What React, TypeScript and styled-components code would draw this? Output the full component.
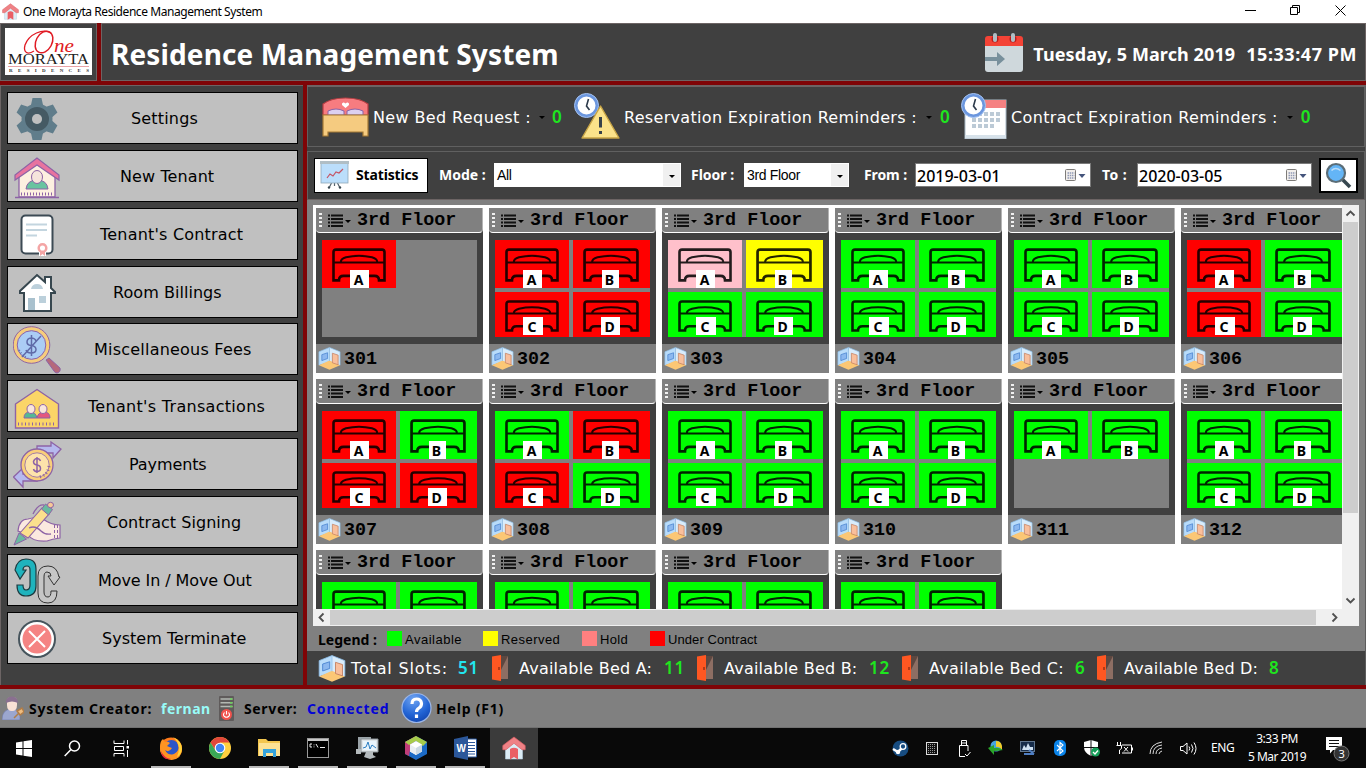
import React from 'react';
import styled, { createGlobalStyle } from 'styled-components';

const verdana = '"DejaVu Sans", Verdana, sans-serif';
const segoe = '"Noto Sans", "Segoe UI", sans-serif';
const msSans = '"Liberation Sans", Arial, sans-serif';

const Global = createGlobalStyle`
  * { box-sizing: border-box; }
  body { margin: 0; background: #404040; overflow: hidden; }
  svg { display: block; flex: none; }
`;

/* ---------- frame ---------- */

const Window = styled.div`
  width: 1366px;
  height: 768px;
  display: flex;
  flex-direction: column;
  background: #7f0406;
  overflow: hidden;
  white-space: pre;
`;

const TitleBar = styled.div`
  height: 23px;
  flex: none;
  background: #fff;
  display: flex;
  align-items: center;
  justify-content: space-between;
  padding-left: 2px;
`;

const TitleLeft = styled.div`
  display: flex;
  align-items: center;
  gap: 4px;
  font: 12px/18px ${segoe};
  letter-spacing: -0.44px;
  color: #000;
`;

const WindowControls = styled.div`
  display: flex;
  align-items: center;
  gap: 34px;
  padding: 0 20px 2px 0;
`;

const Header = styled.header`
  height: 58px;
  flex: none;
  display: flex;
  gap: 4px;
`;

const LogoPanel = styled.div`
  width: 97px;
  background: #404040;
  border: 1px solid #6c6464;
  padding: 4px;
`;

const HeaderMain = styled.div`
  flex: 1;
  background: #404040;
  border: 1px solid #6c6464;
  display: flex;
  align-items: center;
  color: #fff;
  padding: 0 8px 0 9px;
`;

const AppTitle = styled.h1`
  margin: 0;
  flex: 1;
  font: 700 28px/40px ${segoe};
  letter-spacing: 0.12px;
  padding-top: 3px;
`;

const Clock = styled.div`
  font: 700 18px/24px ${segoe};
  display: flex;
  gap: 11px;
  margin-left: 10px;
  padding-top: 3px;
`;
const Day = styled.span`letter-spacing: 0.1px;`;
const Time = styled.span`letter-spacing: 0.55px;`;

const Body = styled.div`
  height: 600px;
  flex: none;
  margin-top: 4px;
  display: flex;
  gap: 4px;
`;

const Sidebar = styled.nav`
  width: 303px;
  background: #404040;
  border: 1px solid #6c6464;
  border-width: 1px 0 0 1px;
  padding: 6px 5px 0 6px;
  display: flex;
  flex-direction: column;
  gap: 6px;
`;

const SideButton = styled.button<{ $pull?: boolean }>`
  height: 52px;
  margin: ${p => (p.$pull ? '-1px' : '0')} 0 0;
  flex: none;
  border: 1px solid #000;
  border-radius: 0;
  background: #c0c0c0;
  padding: 0 0 0 5px;
  display: flex;
  align-items: center;
  color: #000;
`;

const SideLabel = styled.span<{ $indent: number; $track: number }>`
  margin: 2px 0 0 ${p => p.$indent}px;
  font: 16px/20px ${verdana};
  letter-spacing: ${p => p.$track}px;
`;

const Main = styled.main`
  width: 1059px;
  background: #404040;
  border-top: 2px solid #6c6464;
  border-right: 1px solid #5c5c5c;
  display: flex;
  flex-direction: column;
`;

/* ---------- reminders ---------- */

const Reminders = styled.div`
  height: 60px;
  flex: none;
  display: flex;
  align-items: center;
  border: 1px solid #606060;
  border-top: 0;
  padding-left: 14px;
  color: #fff;
`;

const Reminder = styled.div<{ $track: number; $gap: number }>`
  display: flex;
  align-items: center;
  font: 16px/20px ${verdana};
  letter-spacing: ${p => p.$track}px;
  margin-right: ${p => p.$gap}px;
`;
const ReminderText = styled.span`margin: 2px 0 0 4px;`;
const Caret = styled.i<{ $left: number; $right?: number }>`
  border: solid transparent;
  border-width: 3px 3px 0;
  border-top-color: #000;
  margin: 2px ${p => p.$right ?? 0}px 0 ${p => p.$left}px;
`;
const Count = styled.b<{ $color?: string; $w: number; $right?: number }>`
  width: ${p => p.$w}px;
  font: 600 17px/20px ${segoe};
  letter-spacing: 0.8px;
  color: ${p => p.$color ?? '#1ee61e'};
  margin: 0 ${p => p.$right ?? 0}px 0 0;
`;

/* ---------- filters ---------- */

const Filters = styled.div`
  height: 49px;
  flex: none;
  margin-top: 4px;
  border: 1px solid #606060;
  border-bottom-color: #6c6464;
  display: flex;
  align-items: center;
  padding: 0 0 1px 6px;
  color: #fff;
`;

const StatsButton = styled.button`
  width: 114px;
  height: 35px;
  border: 1px solid #000;
  border-radius: 0;
  background: #fff;
  padding: 0 0 0 5px;
  display: flex;
  align-items: center;
  gap: 7px;
  font: 700 14px/20px ${segoe};
  letter-spacing: -0.15px;
  color: #000;
`;

const FieldLabel = styled.label<{ $w: number; $left: number; $track: number }>`
  width: ${p => p.$w}px;
  margin-left: ${p => p.$left}px;
  font: 700 14px/20px ${segoe};
  letter-spacing: ${p => p.$track}px;
`;

const Select = styled.div<{ $w: number }>`
  width: ${p => p.$w}px;
  height: 24px;
  background: #fff;
  color: #000;
  display: flex;
  align-items: center;
  padding-left: 3px;
  font: 14px/20px ${msSans};
  letter-spacing: -0.34px;
`;
const SelectText = styled.span`flex: 1;`;
const SelectArrow = styled.span`
  width: 17px;
  height: 22px;
  margin-right: 1px;
  background: #f0f0f0;
  display: flex;
  align-items: center;
  justify-content: center;
`;

const DateField = styled.div<{ $w: number }>`
  width: ${p => p.$w}px;
  height: 24px;
  border: 1px solid #7a7a7a;
  background: #fff;
  color: #000;
  display: flex;
  align-items: center;
  justify-content: space-between;
  padding: 1px 4px 0 1px;
  font: 500 16px/22px ${segoe};
`;

const SearchButton = styled.button`
  width: 39px;
  height: 35px;
  margin-left: 7px;
  border: 2px solid #000;
  border-radius: 0;
  background: #fff;
  padding: 0;
  display: flex;
  align-items: center;
  justify-content: center;
`;

/* ---------- rooms ---------- */

const RoomArea = styled.section`
  flex: 1;
  background: #808080;
  padding: 5px 5px 0 6px;
  display: flex;
  flex-direction: column;
`;

const RoomFrame = styled.div`
  width: 1046px;
  height: 421px;
  flex: none;
  display: grid;
  grid-template: 404px 17px / 1029px 17px;
  background: #fff;
`;

const RoomGrid = styled.div`
  overflow: hidden;
  padding: 3px;
  display: grid;
  grid-template-columns: repeat(6, 167px);
  grid-auto-rows: 165px;
  gap: 6px;
`;

const RoomCard = styled.article`
  background: #404040;
  display: flex;
  flex-direction: column;
`;

const RoomHead = styled.div`
  height: 25px;
  flex: none;
  background: #808080;
  border-bottom: 1px solid #fff;
  border-right: 1px solid #b4b4b4;
  border-radius: 0 0 4px 4px;
  display: flex;
  align-items: center;
  padding: 1px 0 0 3px;
  font: 700 18.400px/23px "Liberation Mono", "Courier New", monospace;
  color: #000;
`;
const Grip = styled.i`
  width: 3px;
  height: 16px;
  margin-right: 6px;
  background: repeating-linear-gradient(#f0f0f0 0 2px, #808080 2px 4px);
`;
const HeadCaret = styled.i`
  border: solid transparent;
  border-width: 3px 3px 0;
  border-top-color: #000;
  margin: 1px 6px 0 2px;
`;

const BedPanel = styled.div`
  width: 155px;
  height: 97px;
  margin: 7px 6px;
  flex: none;
  background: #808080;
  display: grid;
  grid-template: 48px 45px / 74px 77px;
  gap: 4px;
`;

const BedTile = styled.div<{ $status: Status }>`
  display: grid;
  position: relative;
  background: ${p => ({ A: '#00ff00', R: '#ffff00', H: '#ffc0cb', U: '#ff0000' })[p.$status]};
`;
const BedBadge = styled.span<{ $lower: boolean; $w: number }>`
  position: absolute;
  left: ${p => (p.$w === 17 ? 29 : 28)}px;
  bottom: ${p => (p.$lower ? 2 : 0)}px;
  width: ${p => p.$w}px;
  height: 18px;
  padding-right: 2px;
  background: #fff;
  color: #000;
  text-align: center;
  font: 700 14px/19px ${segoe};
`;

const RoomFoot = styled.div`
  flex: 1;
  background: #808080;
  display: flex;
  align-items: center;
  gap: 3px;
  padding-left: 2px;
  font: 700 18.400px/22px "Liberation Mono", "Courier New", monospace;
  color: #000;
`;
const RoomNumber = styled.span`padding-top: 2px;`;

const VScroll = styled.div`
  background: #f0f0f0;
  display: flex;
  flex-direction: column;
  align-items: center;
  justify-content: space-between;
`;
const VThumb = styled.div`
  width: 15px;
  height: 291px;
  background: #cdcdcd;
  margin-bottom: 79px;
`;
const HScroll = styled.div`
  grid-column: span 2;
  background: #f0f0f0;
  display: flex;
  align-items: center;
`;
const HThumb = styled.div`
  width: 986px;
  height: 15px;
  background: #cdcdcd;
  margin-right: 10px;
`;

const Legend = styled.div`
  height: 25px;
  flex: none;
  display: flex;
  align-items: center;
  padding: 2px 0 0 5px;
  font: 13px/18px ${msSans};
  color: #000;
`;
const LegendTitle = styled.b`
  width: 69px;
  font: 700 14px/18px ${segoe};
`;
const LegendItem = styled.span<{ $color: string; $w: number; $track: number }>`
  width: ${p => p.$w}px;
  letter-spacing: ${p => p.$track}px;
  display: flex;
  gap: 3px;
  align-items: center;
  &::before {
    content: '';
    width: 15px;
    height: 15px;
    margin-top: -2px;
    background: ${p => p.$color};
  }
`;

const Totals = styled.div`
  height: 34px;
  flex: none;
  background: #404040;
  display: flex;
  align-items: center;
  padding-left: 11px;
  color: #fff;
  font: 16px/20px ${verdana};
`;
const TotalText = styled.span<{ $w: number; $left: number; $track: number }>`
  width: ${p => p.$w}px;
  margin-left: ${p => p.$left}px;
  padding-top: 2px;
  letter-spacing: ${p => p.$track}px;
`;

/* ---------- status bar ---------- */

const StatusBar = styled.footer`
  height: 39px;
  flex: none;
  margin-top: 4px;
  background: #808080;
  border-bottom: 1px solid #707070;
  display: flex;
  align-items: center;
  padding-left: 2px;
  color: #000;
  font: 700 14px/18px ${segoe};
`;
const StatusText = styled.span<{ $w: number; $left: number; $track: number; $color?: string }>`
  width: ${p => p.$w}px;
  margin-left: ${p => p.$left}px;
  padding-top: 1px;
  letter-spacing: ${p => p.$track}px;
  color: ${p => p.$color ?? '#000'};
`;

/* ---------- taskbar ---------- */

const Taskbar = styled.div`
  height: 40px;
  flex: none;
  background: #090909;
  display: flex;
  color: #fff;
`;
const Task = styled.div<{ $w: number; $running?: boolean; $active?: boolean }>`
  width: ${p => p.$w}px;
  display: flex;
  align-items: center;
  justify-content: center;
  background: ${p => (p.$active ? '#3b3b3b' : p.$running ? 'linear-gradient(#b9b9b9, #b9b9b9) 50% 100% / 40px 2px no-repeat' : 'none')};
`;
const Tray = styled.div`
  margin-left: auto;
  display: flex;
  align-items: center;
  font: 12px/18px ${segoe};
`;
const TrayIcon = styled.span`
  width: 32px;
  display: flex;
  justify-content: center;
`;
const Language = styled.span`
  width: 34px;
  margin-left: 7px;
  letter-spacing: -0.4px;
`;
const TrayClock = styled.div`
  width: 64px;
  text-align: center;
  letter-spacing: -0.5px;
`;
const Notifications = styled.span`
  margin: 3px 16px 0 17px;
`;

/* ---------- icons ---------- */

const HouseIcon = ({ s }: { s: number }) => (
  <svg width={s} height={s} viewBox="0 0 24 24">
    <path d="M3.500 11v12h17V11L12 4z" fill="#dcecf5" stroke="#b5cfdf" strokeWidth=".6" />
    <path d="M8 13q4-2.500 8 0v10.500l-4-2.500-4 2.500z" fill="#ea5f66" />
    <path d="M12 1 .8 9.500v4.200H4l8-6.400 8 6.400h3.200V9.500z" fill="#ef8185" stroke="#d85f64" strokeWidth=".7" />
  </svg>
);

const LogoArt = () => (
  <svg width="87" height="47" viewBox="0 0 87 47">
    <rect width="87" height="47" fill="#fff" />
    <ellipse cx="39" cy="14" rx="8" ry="11.500" transform="rotate(28 39 14)" fill="none" stroke="#e01b24" strokeWidth="1.500" />
    <path d="M46 5C38 0 24 6 20 17c-2 8 3 10 9 6" fill="none" stroke="#e01b24" strokeWidth="1.300" />
    <text x="49" y="24" fontFamily="Liberation Serif, serif" fontStyle="italic" fontSize="18" fill="#e01b24" textLength="20" lengthAdjust="spacingAndGlyphs">ne</text>
    <text x="3" y="36" fontFamily="Liberation Serif, serif" fontSize="15" fill="#222" textLength="81" lengthAdjust="spacingAndGlyphs">MORAYTA</text>
    <path d="M3 38.500h81" stroke="#e9a3a6" />
    <text x="4" y="43.500" fontFamily="Liberation Serif, serif" fontWeight="700" fontSize="5" fill="#333" textLength="80">RESIDENCES</text>
  </svg>
);

const DateIcon = () => (
  <svg width="38" height="39" viewBox="0 0 38 39">
    <path d="M0 13h38v23q0 3-3 3H3q-3 0-3-3z" fill="#cfd8dc" />
    <path d="M0 13V6q0-3 3-3h32q3 0 3 3v7z" fill="#f44336" />
    <circle cx="10" cy="6" r="3.500" fill="#b71c1c" /><circle cx="28" cy="6" r="3.500" fill="#b71c1c" />
    <rect x="8" y="0" width="4" height="9" rx="2" fill="#b0bec5" /><rect x="26" y="0" width="4" height="9" rx="2" fill="#b0bec5" />
    <path d="M0 24h12v-5l8 7-8 7v-5H0z" fill="#78909c" />
  </svg>
);

const box = { width: 50, height: 50, viewBox: '0 0 50 50' };

const GearIcon = () => (
  <svg {...box}>
    <g fill="#607d8b">
      {[0, 60, 120].map(a => <path key={a} transform={`rotate(${a} 24 26)`} d="M18 12l1.500-7h9l1.500 7v28l-1.500 7h-9L18 40z" />)}
      <circle cx="24" cy="26" r="15.500" />
    </g>
    <circle cx="24" cy="26" r="8.500" fill="none" stroke="#455a64" strokeWidth="7" />
    <circle cx="24" cy="26" r="5" fill="#c0c0c0" />
  </svg>
);

const TenantIcon = () => (
  <svg {...box}>
    <path d="M6 22v24h36V22L24 9z" fill="#fdf0e0" stroke="#8d63a6" strokeWidth="1.300" />
    <path d="M24 7 2 24v5l22-15 22 15v-5z" fill="#e8739f" stroke="#8d63a6" strokeWidth="1.200" />
    <path d="M13 38q1-9 11-9t11 9z" fill="#69c3a0" stroke="#8d63a6" />
    <ellipse cx="24" cy="26" rx="5.500" ry="6.500" fill="#f6e4dc" stroke="#8d63a6" />
    <path d="M8 43h33" stroke="#8d63a6" strokeWidth="3" strokeDasharray="1 2" /><path d="M2 46.500h44" stroke="#8d63a6" strokeWidth="1.500" />
  </svg>
);

const ContractIcon = () => (
  <svg {...box}>
    <rect x="8.500" y="6.500" width="31" height="38" rx="4" fill="#fff" stroke="#3c4a54" strokeWidth="2" />
    <path d="M13 15.500h21M13 21h21M13 26.500h11" stroke="#c3d5df" strokeWidth="2" />
    <path d="M26 42v5h7v-5z" fill="#fff" /><path d="M27 40v7l2.500-2 2.500 2v-7z" fill="#f4a5a5" />
    <circle cx="29.500" cy="39" r="3.800" fill="#fff" stroke="#f4a5a5" strokeWidth="2.500" />
  </svg>
);

const BillingIcon = () => (
  <svg {...box}>
    <path d="M11 44V26H7v-2L24 8l8 7v-5h6v11l4 4v1h-4v18z" fill="#fff" stroke="#37474f" strokeWidth="2" />
    <path d="M18 22q1-5 6-5t6 5z" fill="#bcd0db" /><path d="M15 43V31h7v12z" fill="#a9c1ce" /><path d="M26 29h7v7h-7z" fill="#bcd0db" />
  </svg>
);

const FeesIcon = () => (
  <svg {...box}>
    <path d="M33 36l3-2 11 10q1 4-3 5-2 0-3-2z" fill="#b5697b" stroke="#8d63a6" />
    <circle cx="18.500" cy="21" r="16.500" fill="none" stroke="#f6cd7c" strokeWidth="4" />
    <circle cx="18.500" cy="21" r="18.300" fill="none" stroke="#8d63a6" />
    <circle cx="18.500" cy="21" r="14.300" fill="#abcdf5" stroke="#8d63a6" />
    <path d="M9 33 28 12M18.500 11v21M23 17q-1-3-5-3-4 .5-4 4 0 3 4 3.500 5 .5 5 4t-5 3.500q-4 0-5-3" fill="none" stroke="#5f6aa8" strokeWidth="1.500" />
    <path d="M6 26q3 6 9 8" fill="none" stroke="#6573b0" strokeWidth="2" strokeDasharray="1 2" />
  </svg>
);

const TransactionsIcon = () => (
  <svg {...box}>
    <path d="M2.500 23 24 8.500 45.500 23v24h-43z" fill="#fbd568" stroke="#8d63a6" strokeWidth="1.400" />
    <path d="M11 37q0-6 6-6t7 6z" fill="#55b895" stroke="#8d63a6" /><path d="M24 37q1-6 7-6t6 6z" fill="#e4587f" stroke="#8d63a6" />
    <ellipse cx="18" cy="28" rx="4" ry="4.500" fill="#f9e6dc" stroke="#8d63a6" /><ellipse cx="30" cy="28" rx="4" ry="4.500" fill="#f9e6dc" stroke="#8d63a6" />
    <path d="M5 43h38" stroke="#8d63a6" strokeWidth="3" strokeDasharray="1 2.500" />
  </svg>
);

const PaymentsIcon = () => (
  <svg {...box}>
    <path d="M24 7h14V3l10 7-8 9 0-5H24zM24 42H10v6L.5 38 10 29v6h14z" fill="#b6b9ee" stroke="#8d63a6" strokeWidth="1.300" />
    <circle cx="24" cy="26" r="16" fill="#f9cf7a" stroke="#8d63a6" strokeWidth="1.300" />
    <circle cx="24" cy="26" r="12.200" fill="#fde3ab" stroke="#8d63a6" strokeWidth=".8" />
    <path d="M24 18v16M27.500 22q-1-2.500-3.500-2.500t-3.500 3q0 3 3.500 3.500 3.500.5 3.500 3.500T24 32.500q-3 0-3.500-2.500" fill="none" stroke="#8d63a6" strokeWidth="1.500" />
    <path d="M36 27q-1 9-10 11" fill="none" stroke="#8d63a6" strokeWidth="3" strokeDasharray="1 2.500" />
  </svg>
);

const SigningIcon = () => (
  <svg {...box}>
    <path d="M5 34q1-12 10-12 10-3 15 0 8 6 17 6v13q-8 1-13 3-14 1-19-6z" fill="#fbe9df" stroke="#8d63a6" strokeWidth="1.200" />
    <path d="M41.500 28v14M44.500 28v13" stroke="#8d63a6" strokeDasharray="3 2" />
    <path d="M7 36 29 11l7 6-21 24z" fill="#fbe08d" stroke="#8d63a6" strokeWidth="1.100" />
    <path d="M28.500 12l4-5 7 5.500-4 5.500zM1 48l5-12 7.500 6z" fill="#69b9a0" stroke="#8d63a6" /><ellipse cx="37.500" cy="8" rx="3" ry="2.700" fill="#f7c896" stroke="#8d63a6" />
    <path d="M31 8q-6-1-11 9M16 31q6-3 12 3 4 4 10 3" fill="none" stroke="#8d63a6" strokeWidth="1.300" />
  </svg>
);

const MoveIcon = () => (
  <svg {...box}>
    <path d="M2 15q2-11 11-11 10 0 10 10v17q0 10-10 10-9 0-9-11h6q0 5 3 5 4 0 4-5V15q0-4-3-4-4 0-4 4h3l-6 9-5-9z" fill="#1fb3bd" stroke="#1b3b40" strokeWidth="1.200" />
    <path d="M46 22q-2-11-11-11-10 0-10 10v17q0 10 10 10 9 0 9-12h-6q0 6-3 6-4 0-4-5V22q0-5 3-5 4 0 4 4h-3l6 9 6-8z" fill="#c6c6c6" stroke="#333" strokeWidth="1" />
  </svg>
);

const TerminateIcon = () => (
  <svg {...box}>
    <circle cx="24" cy="26" r="18" fill="#fff" stroke="#46545c" strokeWidth="2" />
    <circle cx="24" cy="26" r="14.500" fill="#f58483" />
    <path d="m16 18 16 16m0-16L16 34" stroke="#fff" strokeWidth="2" />
  </svg>
);

const BedRequestIcon = () => (
  <svg width="47" height="40" viewBox="0 0 47 40">
    <path d="M1 18V7q8-6 22.500-6T46 7v11z" fill="#f77c80" stroke="#b83d42" strokeWidth="1.200" />
    <path d="M6 18v-4q8-4 16 0v4zM25 18v-4q8-4 16 0v4z" fill="#dcd0f0" stroke="#8d63a6" />
    <path d="M1 18h45v21h-5v-4H6v4H1z" fill="#f5cb80" stroke="#a57a35" strokeWidth="1.200" />
    <path d="M23.500 11l-3.500-3q-.5-3 2-2.500l1.500 1 1.500-1q2.500-.5 2 2.500z" fill="#fff" />
  </svg>
);

const ClockFace = () => (
  <>
    <circle cx="12.500" cy="12.500" r="10.500" fill="#fff" stroke="#6b96de" strokeWidth="3" />
    <circle cx="12.500" cy="12.500" r="12" fill="none" stroke="#a5c3f2" strokeWidth="1" />
    <path d="m14.500 6-2 7 3 4" fill="none" stroke="#2c3a4a" strokeWidth="1.600" />
  </>
);

const ReservationIcon = () => (
  <svg width="46" height="47" viewBox="0 0 46 47">
    <ClockFace />
    <path d="M26.500 13 45 45H8z" fill="#fbe28a" stroke="#c7a445" strokeWidth="1.400" strokeLinejoin="round" />
    <path d="M26.500 24v10.500M26.500 38v3" stroke="#37414a" strokeWidth="3" />
  </svg>
);

const ContractExpiryIcon = () => (
  <svg width="46" height="47" viewBox="0 0 46 47">
    <rect x="4" y="7" width="41" height="38.500" fill="#fff" stroke="#a9b9c6" />
    <path d="M4 7h41v8H4z" fill="#f58182" /><path d="M4 42h41v3.500H4z" fill="#d7e2ea" />
    <path d="M17 21h22M11 27h28M11 33h22" stroke="#bccad6" strokeWidth="4" strokeDasharray="4 2" />
    <ClockFace />
  </svg>
);

const ChartIcon = () => (
  <svg width="29" height="28" viewBox="0 0 29 28">
    <path d="M14.500 21v4m-3-3-2 4m8-4 2 4" stroke="#56646e" strokeWidth="1.200" />
    <rect x="1" y="2" width="27" height="20" fill="#bbdefb" stroke="#90a9b8" strokeWidth=".8" />
    <rect x="0" y="0" width="29" height="3" fill="#b0bec5" />
    <path d="m7 17 3-4 3 2 3-4 3 1 4-4" fill="none" stroke="#c55363" strokeWidth="1.200" />
    <circle cx="9" cy="26.500" r="1.200" fill="#37474f" /><circle cx="20" cy="26.500" r="1.200" fill="#37474f" />
  </svg>
);

const PickerIcon = () => (
  <svg width="21" height="13" viewBox="0 0 21 13">
    <rect x=".5" y=".5" width="10" height="11" rx="1" fill="#f2efec" stroke="#7d7b78" />
    <path d="M2.500 4h7M2.500 6.500h7M2.500 9h7" stroke="#8f99b5" strokeDasharray="1.500 .7" strokeWidth="1.500" />
    <path d="M13.500 5h7L17 9z" fill="#44547c" />
  </svg>
);

const SearchIcon = () => (
  <svg width="27" height="27" viewBox="0 0 27 27">
    <path d="m17 17 8 8" stroke="#37474f" strokeWidth="3.500" />
    <circle cx="11" cy="11" r="9" fill="#64b5f6" stroke="#5b6d77" strokeWidth="2.200" />
    <path d="M6.500 8.500q4-4 9 0" stroke="#bbdefb" strokeWidth="1.600" fill="none" />
  </svg>
);

const ListIcon = () => (
  <svg width="15" height="13" viewBox="0 0 15 13">
    <path d="M3 1.500h12M3 5h12M3 8.500h12M3 12h12M0 1.500h2M0 5h2M0 8.500h2M0 12h2" stroke="#111" strokeWidth="1.900" />
  </svg>
);

const BedOutline = styled.svg.attrs({ viewBox: '0 0 54 33', preserveAspectRatio: 'none' })<{ $wide: boolean; $lower: boolean }>`
  width: ${p => (p.$wide ? 56 : 54)}px;
  height: ${p => (p.$lower ? 32 : 34)}px;
  margin: 8px 0 0 10px;
  opacity: 0.86;
`;

const BedShape = ({ wide, lower }: { wide: boolean; lower: boolean }) => (
  <BedOutline $wide={wide} $lower={lower}>
    <path d="M1.500 31.500V4q0-2.500 2.500-2.500h46q2.500 0 2.500 2.500v27.500h-5.500q0-4.500-4.500-4.500h-31q-4.500 0-4.500 4.500z" fill="none" stroke="#000" strokeWidth="2.600" />
    <path d="M2 14h50M9 14q-1-3 5-5 13-3 26 0 6 2 5 5" fill="none" stroke="#000" strokeWidth="2" />
  </BedOutline>
);

const CubeIcon = ({ w, h }: { w: number; h: number }) => (
  <svg width={w} height={h} viewBox="0 0 24 24" preserveAspectRatio="none">
    <path d="M1 5 12 .5V15L1 19z" fill="#b9dcfa" /><path d="M12 .5 23 5v14l-11-4z" fill="#d9ecfb" />
    <path d="M1 19l11-5 11 5-11 4.800z" fill="#fbc775" />
    <path d="M4 8l6-2v6l-6 2.200z" fill="#8cb8ef" stroke="#4b84d0" strokeWidth=".8" />
    <path d="M15 16.500V6.500l6 2V18.500z" fill="#f9bf9c" stroke="#c48264" strokeWidth=".8" />
    <path d="M1 5 12 .5 23 5M12 1v13.500M1 5v14M23 5v14" stroke="#8fc1ec" strokeWidth=".7" fill="none" />
  </svg>
);

const DoorIcon = () => (
  <svg width="16" height="26" viewBox="0 0 16 26">
    <path d="M6 1h10v23H6z" fill="#8d6e63" /><path d="m16 1-7 14V1z" fill="#5d4740" />
    <path d="M0 1.500 9 0v26l-9-1.500z" fill="#ff5722" /><path d="M7 12v3" stroke="#8b2a10" strokeWidth="1.300" />
  </svg>
);

const CreatorIcon = () => (
  <svg width="22" height="24" viewBox="0 0 22 24">
    <path d="M0 24q0-11 10-11 6 0 8 4v7z" fill="#9ba6cf" stroke="#6f78a8" strokeWidth=".6" />
    <path d="M5 5q0-4 5-4t5 4v4q0 6-5 6T5 9z" fill="#f9e1d5" /><path d="M4 7q-1-6 6-6.500Q16 .5 16 7q-6-3-12 0z" fill="#8a7090" />
    <path d="m12 22 5-5M15 15l5-3 2 4-4 3z" stroke="#b07d48" strokeWidth="1.500" fill="#efbc7f" />
  </svg>
);

const ServerIcon = () => (
  <svg width="15" height="25" viewBox="0 0 15 25">
    <rect width="15" height="25" rx="1" fill="#5f5b5b" />
    <path d="M1.500 3h12M1.500 6.800h12M1.500 10.500h12" stroke="#b3b8b2" strokeWidth="1.600" /><path d="M11 3h2.500M11 6.800h2.500M11 10.500h2.500" stroke="#6bd35b" strokeWidth="1.600" />
    <circle cx="7.500" cy="18.500" r="5.500" fill="#f2524d" /><path d="M5.500 16.500q-2 2.500 0 4t4 0q2-1.500 0-4M7.500 15v3.500" stroke="#fff" strokeWidth="1.100" fill="none" />
  </svg>
);

const HelpIcon = () => (
  <svg width="31" height="32" viewBox="0 0 31 32">
    <defs><radialGradient id="help" cx=".4" cy=".2" r=".9"><stop offset="0" stopColor="#6fa4f2" /><stop offset=".6" stopColor="#2163d4" /><stop offset="1" stopColor="#0e3fa8" /></radialGradient></defs>
    <circle cx="15.500" cy="16" r="14.500" fill="url(#help)" stroke="#9cb6e6" strokeWidth="1.200" />
    <path d="M11 12q0-5 4.500-5t5 4.500q0 3-2.500 4.500t-2.500 4M15.500 22.500v3.500" stroke="#fff" strokeWidth="3.200" fill="none" />
  </svg>
);

/* taskbar icons */
const StartIcon = () => (
  <svg width="16" height="17" viewBox="0 0 16 17" fill="#fff"><path d="M0 2.500 6.500 1.500v6.500H0zM7.500 1.300 16 0v8H7.500zM0 9h6.500v6.500L0 14.500zM7.500 9H16v8l-8.500-1.300z" /></svg>
);
const TaskSearchIcon = () => (
  <svg width="17" height="17" viewBox="0 0 17 17" fill="none" stroke="#fff" strokeWidth="1.500"><circle cx="10.500" cy="6" r="5" /><path d="M7 9.500.7 16" /></svg>
);
const TaskViewIcon = () => (
  <svg width="17" height="17" viewBox="0 0 17 17" fill="none" stroke="#fff"><path d="M1 .5v3h10v-3M1 16.500v-3h10v3M1.500 6.500h9v4h-9zM14.500 0v4.500M14.500 10v7" /><path d="M13.500 6h2.500v2.500h-2.500z" fill="#fff" stroke="none" /></svg>
);
const FirefoxIcon = () => (
  <svg width="24" height="24" viewBox="0 0 24 24">
    <circle cx="12" cy="12.500" r="11" fill="#ff7b1c" /><circle cx="12.500" cy="11.500" r="7.500" fill="#2b56c8" />
    <path d="M1 11Q1 5 4 3l2 3q3-1 5 1l-3 3q2 1 5 2-3 5-7 2 3 6 9 4 6-3 4-9-1-4-3-6 7 4 7 10 0 10-10.500 11Q1 22 1 11z" fill="#ff9422" />
    <path d="M14 1q9 4 9 12-1 6-5 8 2-5 2-9-1-7-6-11z" fill="#ffd43a" /><path d="M2 15q3 7 10 8-9 2-10-8z" fill="#e5233f" />
  </svg>
);
const ChromeIcon = () => (
  <svg width="22" height="22" viewBox="0 0 22 22">
    <circle cx="11" cy="11" r="11" fill="#ffcf3f" />
    <path d="M1.500 5.500A11 11 0 0 1 20.500 5.500H11L6.500 13.500z" fill="#e2473a" /><path d="M1.500 5.500A11 11 0 0 0 11 22L15.500 13.500 6.500 13.500z" fill="#3aa757" />
    <circle cx="11" cy="11" r="5.300" fill="#fff" /><circle cx="11" cy="11" r="4.200" fill="#4285f4" />
  </svg>
);
const ExplorerIcon = () => (
  <svg width="22" height="20" viewBox="0 0 22 20">
    <path d="M0 1h8l2 2h12v15H0z" fill="#f3c64f" /><path d="M1 5h21v13H1z" fill="#fde294" /><path d="M5 19v-8h13v8h-3v-4H8v4z" fill="#35a3db" />
  </svg>
);
const CmdIcon = () => (
  <svg width="22" height="20" viewBox="0 0 22 20">
    <rect x=".5" y=".5" width="21" height="19" fill="#000" stroke="#9a9a9a" /><path d="M1 1h20v2H1z" fill="#c9c9c9" />
    <path d="M5 6H3v3h2M7 6.500v.8M7 8.500v.8M9 6l2 3.500M13 9.500h5" stroke="#eee" fill="none" />
  </svg>
);
const MonitorIcon = () => (
  <svg width="24" height="22" viewBox="0 0 24 22">
    <path d="M3 0h13v12H3z" fill="#9aa3a8" /><path d="M6 2h17v13H6z" fill="#dfe5e8" stroke="#8d9498" /><path d="M8 4h13v9H8z" fill="#e9f4fb" />
    <path d="m8 11 3-1 2-5 2 7 2-4 4 3" stroke="#2a7cc0" fill="none" /><path d="M1 12h5v5H1zM11 15h7v3l3 2-6 2-6-2z" fill="#b4babd" />
  </svg>
);
const NetbeansIcon = () => (
  <svg width="22" height="24" viewBox="0 0 22 24">
    <path d="M11 0 22 6v12l-11 6L0 18V6z" fill="#1b6ac6" /><path d="M11 0 0 6v12l4 2 2-12 6-4z" fill="#d2386f" opacity=".9" /><path d="M11 0 22 6l-4 4-7-5-7 4-4-3z" fill="#a7cc4b" />
    <path d="m11 5 6 3.500v7L11 19l-6-3.500v-7z" fill="#fff" /><path d="m11 12 6-3.500v7L11 19z" fill="#cbd9e4" /><path d="M11 12 5 8.500v7L11 19z" fill="#e9eef2" />
  </svg>
);
const WordIcon = () => (
  <svg width="23" height="24" viewBox="0 0 23 24">
    <path d="M13 3h9.500v18H13z" fill="#fff" stroke="#2b579a" /><path d="M14 6.500h7M14 9.500h7M14 12.500h7M14 15.500h7M14 18h7" stroke="#2b579a" /><path d="M0 3 14 0v24L0 21z" fill="#2b579a" />
    <text x="2.500" y="16" fontFamily="Liberation Sans" fontWeight="700" fontSize="10" fill="#fff">W</text>
  </svg>
);

const SteamIcon = () => (
  <svg width="17" height="17" viewBox="0 0 17 17"><circle cx="8.500" cy="8.500" r="8" fill="#174c80" /><path d="m1 9 5 3 5-5" stroke="#fff" strokeWidth="2.500" fill="none" /><circle cx="11" cy="6.500" r="2.800" fill="#174c80" stroke="#fff" strokeWidth="1.300" /><circle cx="6" cy="12" r="2.200" fill="#fff" /></svg>
);
const GridIcon = () => (
  <svg width="12" height="13" viewBox="0 0 12 13"><rect x=".5" y=".5" width="11" height="12" fill="#111" stroke="#ddd" /><path d="M2 2.500h8M2 4.500h8M2 6.500h8M2 8.500h8M2 10.500h8" stroke="#999" strokeDasharray="1 1" /></svg>
);
const UsbIcon = () => (
  <svg width="13" height="17" viewBox="0 0 13 17" fill="none" stroke="#fff"><path d="M3.500 5.500V.5h5v5M7 16.500H1.500v-11h8.500V11M5 2v2M7 2v2M7 14l2 2 3.500-4" /></svg>
);
const IdmIcon = () => (
  <svg width="16" height="16" viewBox="0 0 16 16"><circle cx="8" cy="6" r="5.500" fill="#46a3df" /><path d="M8 1q7 0 6 9-3-4-6-3z" fill="#f2cc28" /><path d="M0 8l6-3v3q5-1 9 2-5 1-9 1v4z" fill="#2aa52a" /></svg>
);
const DisplayIcon = () => (
  <svg width="16" height="15" viewBox="0 0 16 15"><rect x=".5" y=".5" width="14" height="10" fill="#162c4a" stroke="#60768e" /><path d="M2 9l2-5 2 3 2-5 2 4h3v3z" fill="#cfe1f2" /><path d="M4 13h10M9 9l5 4" stroke="#4f7ec2" strokeWidth="2" /></svg>
);
const BluetoothIcon = () => (
  <svg width="12" height="16" viewBox="0 0 12 16"><rect width="12" height="16" rx="5" fill="#0a84ea" /><path d="m3 5 6 6-3 2.500v-11L9 5l-6 6" stroke="#fff" fill="none" strokeWidth="1.100" /></svg>
);
const ShieldIcon = () => (
  <svg width="16" height="17" viewBox="0 0 16 17"><path d="M7 0 0 2v5q0 6 7 9 7-3 7-9V2z" fill="#fff" /><path d="M7 0v16M0 7.500h14" stroke="#111" /><circle cx="11.500" cy="12" r="4.500" fill="#16a05a" /><path d="m9 12 2 2 3-3.500" stroke="#fff" fill="none" strokeWidth="1.300" /></svg>
);
const PowerIcon = () => (
  <svg width="17" height="13" viewBox="0 0 17 13" fill="none" stroke="#fff"><path d="M1.500 0v3M4.500 0v3M.5 3.500h5v3l-2 1.500v4M6 3h9.500v8H6M16.500 5.500v3M8 5l4 4.500M12 5 8 9.500" /></svg>
);
const WifiIcon = () => (
  <svg width="14" height="14" viewBox="0 0 14 14" fill="none" stroke="#ddd"><path d="M1 13Q1 3 13 1M4 13q0-8 9-9M7 13q0-5 6-6M10 13q0-2 3-3" /></svg>
);
const SpeakerIcon = () => (
  <svg width="17" height="13" viewBox="0 0 17 13" fill="none" stroke="#fff"><path d="M.5 4.500v4H3l4 3.500V1L3 4.500zM9 4.500q1.500 2 0 4M11.500 2.500q3 4 0 8M14 .5q4 6 0 12" /></svg>
);
const NotifyIcon = () => (
  <svg width="24" height="25" viewBox="0 0 24 25">
    <path d="M0 0h16v13H7l-3 3.500V13H0z" fill="#fff" /><path d="M3 3.500h10M3 6.500h10M3 9.500h10" stroke="#111" />
    <circle cx="15.500" cy="16.500" r="7.500" fill="#333" stroke="#777" /><text x="12.500" y="20.500" fontFamily="Noto Sans" fontSize="11" fill="#fff">3</text>
  </svg>
);

const Arrow = ({ d }: { d: string }) => (
  <svg width="17" height="17" viewBox="0 0 17 17"><path d={d} fill="none" stroke="#505050" strokeWidth="1.800" /></svg>
);

/* ---------- data ---------- */

type Status = 'A' | 'R' | 'H' | 'U';

const menu: [string, () => React.ReactElement, number, number, boolean?][] = [
  ['Settings', GearIcon, 68, 0.17],
  ['New Tenant', TenantIcon, 57, 0.1],
  ["Tenant's Contract", ContractIcon, 37, 0.2],
  ['Room Billings', BillingIcon, 50, 0.05],
  ['Miscellaneous Fees', FeesIcon, 31, 0.22, true],
  ["Tenant's Transactions", TransactionsIcon, 25, 0.3, true],
  ['Payments', PaymentsIcon, 66, -0.1],
  ['Contract Signing', SigningIcon, 44, 0.04],
  ['Move In / Move Out', MoveIcon, 35, -0.09],
  ['System Terminate', TerminateIcon, 39, 0.02],
];

/* rooms without a number sit below the fold: only their top beds show */
const rooms: [number | null, string][] = [
  [301, 'U'], [302, 'UUUU'], [303, 'HRAA'], [304, 'AAAA'], [305, 'AAAA'], [306, 'UAUA'],
  [307, 'UAUU'], [308, 'AUUA'], [309, 'AAAA'], [310, 'AAAA'], [311, 'AA'], [312, 'AAAA'],
  [null, 'AA'], [null, 'AA'], [null, 'AA'], [null, 'AA'],
];

const badgeWidths = [19, 17, 20, 19];

const Room = ({ id, beds }: { id: number | null; beds: string }) => (
  <RoomCard>
    <RoomHead><Grip /><ListIcon /><HeadCaret />3rd Floor</RoomHead>
    <BedPanel>
      {beds.split('').map((s, i) => (
        <BedTile key={i} $status={s as Status}>
          <BedShape wide={i % 2 === 1} lower={i > 1} />
          {id && <BedBadge $lower={i > 1} $w={badgeWidths[i]}>{'ABCD'[i]}</BedBadge>}
        </BedTile>
      ))}
    </BedPanel>
    {id && <RoomFoot><CubeIcon w={23} h={23} /><RoomNumber>{id}</RoomNumber></RoomFoot>}
  </RoomCard>
);

export default function App() {
  return (
    <Window>
      <Global />
      <TitleBar>
        <TitleLeft><HouseIcon s={17} />One Morayta Residence Management System</TitleLeft>
        <WindowControls>
          <svg width="11" height="11" stroke="#000"><path d="M0 5.500h11" /></svg>
          <svg width="11" height="11" fill="none" stroke="#000"><path d="M.5 2.500h7v7h-7zM2.500 2.500v-2h7v7h-2" /></svg>
          <svg width="11" height="11" stroke="#000"><path d="m.5.5 10 10m0-10-10 10" /></svg>
        </WindowControls>
      </TitleBar>
      <Header>
        <LogoPanel><LogoArt /></LogoPanel>
        <HeaderMain>
          <AppTitle>Residence Management System</AppTitle>
          <DateIcon />
          <Clock><Day>Tuesday, 5 March 2019</Day><Time>15:33:47 PM</Time></Clock>
        </HeaderMain>
      </Header>
      <Body>
        <Sidebar>
          {menu.map(([label, Icon, indent, track, pull]) => (
            <SideButton key={label} $pull={pull}><Icon /><SideLabel $indent={indent} $track={track}>{label}</SideLabel></SideButton>
          ))}
        </Sidebar>
        <Main>
          <Reminders>
            <Reminder $track={0.38} $gap={11}><BedRequestIcon /><ReminderText>New Bed Request :</ReminderText><Caret $left={8} $right={7} /><Count $w={11}>0</Count></Reminder>
            <Reminder $track={0.32} $gap={11}><ReservationIcon /><ReminderText>Reservation Expiration Reminders :</ReminderText><Caret $left={9} $right={8} /><Count $w={10}>0</Count></Reminder>
            <Reminder $track={0.35} $gap={0}><ContractExpiryIcon /><ReminderText>Contract Expiration Reminders :</ReminderText><Caret $left={9} $right={8} /><Count $w={11}>0</Count></Reminder>
          </Reminders>
          <Filters>
            <StatsButton><ChartIcon />Statistics</StatsButton>
            <FieldLabel $w={55} $left={11} $track={0}>Mode :</FieldLabel>
            <Select $w={187}><SelectText>All</SelectText><SelectArrow><Caret $left={0} /></SelectArrow></Select>
            <FieldLabel $w={53} $left={10} $track={0}>Floor :</FieldLabel>
            <Select $w={105}><SelectText>3rd Floor</SelectText><SelectArrow><Caret $left={0} /></SelectArrow></Select>
            <FieldLabel $w={51} $left={15} $track={-0.1}>From :</FieldLabel>
            <DateField $w={176}>2019-03-01<PickerIcon /></DateField>
            <FieldLabel $w={35} $left={11} $track={0.4}>To :</FieldLabel>
            <DateField $w={175}>2020-03-05<PickerIcon /></DateField>
            <SearchButton><SearchIcon /></SearchButton>
          </Filters>
          <RoomArea>
            <RoomFrame>
              <RoomGrid>{rooms.map(([id, beds], i) => <Room key={i} id={id} beds={beds} />)}</RoomGrid>
              <VScroll>
                <Arrow d="m4.500 10.500 4-4 4 4" />
                <VThumb />
                <Arrow d="m4.500 6.500 4 4 4-4" />
              </VScroll>
              <HScroll>
                <Arrow d="m10.500 4.500-4 4 4 4" />
                <HThumb />
                <Arrow d="m6.500 4.500 4 4-4 4" />
              </HScroll>
            </RoomFrame>
            <Legend>
              <LegendTitle>Legend :</LegendTitle>
              <LegendItem $color="#00ff00" $w={96} $track={0.5}>Available</LegendItem>
              <LegendItem $color="#ffff00" $w={99} $track={0.45}>Reserved</LegendItem>
              <LegendItem $color="#ff8080" $w={68} $track={0.3}>Hold</LegendItem>
              <LegendItem $color="#ff0000" $w={110} $track={0.08}>Under Contract</LegendItem>
            </Legend>
          </RoomArea>
          <Totals>
            <CubeIcon w={28} h={27} />
            <TotalText $w={107} $left={5} $track={0.85}>Total Slots:</TotalText><Count $color="#22e6f0" $w={20} $right={14}>51</Count>
            <DoorIcon /><TotalText $w={145} $left={11} $track={0.22}>Available Bed A:</TotalText><Count $w={20} $right={13}>11</Count>
            <DoorIcon /><TotalText $w={145} $left={11} $track={0.22}>Available Bed B:</TotalText><Count $w={20} $right={13}>12</Count>
            <DoorIcon /><TotalText $w={146} $left={11} $track={0.3}>Available Bed C:</TotalText><Count $w={10} $right={12}>6</Count>
            <DoorIcon /><TotalText $w={145} $left={11} $track={0.18}>Available Bed D:</TotalText><Count $w={10}>8</Count>
          </Totals>
        </Main>
      </Body>
      <StatusBar>
        <CreatorIcon />
        <StatusText $w={132} $left={5} $track={0.8}>System Creator:</StatusText>
        <StatusText $w={58} $left={0} $track={0.5} $color="#98fbf8">fernan</StatusText>
        <ServerIcon />
        <StatusText $w={63} $left={10} $track={0.65}>Server:</StatusText>
        <StatusText $w={94} $left={0} $track={0.85} $color="#0404d4">Connected</StatusText>
        <HelpIcon />
        <StatusText $w={80} $left={4} $track={0.8}>Help (F1)</StatusText>
      </StatusBar>
      <Taskbar>
        <Task $w={48}><StartIcon /></Task>
        <Task $w={48}><TaskSearchIcon /></Task>
        <Task $w={50}><TaskViewIcon /></Task>
        <Task $w={49} $running><FirefoxIcon /></Task>
        <Task $w={49}><ChromeIcon /></Task>
        <Task $w={49} $running><ExplorerIcon /></Task>
        <Task $w={49} $running><CmdIcon /></Task>
        <Task $w={49} $running><MonitorIcon /></Task>
        <Task $w={49} $running><NetbeansIcon /></Task>
        <Task $w={50} $running><WordIcon /></Task>
        <Task $w={48} $active><HouseIcon s={24} /></Task>
        <Tray>
          {[SteamIcon, GridIcon, UsbIcon, IdmIcon, DisplayIcon, BluetoothIcon, ShieldIcon, PowerIcon, WifiIcon, SpeakerIcon].map((Icon, i) => <TrayIcon key={i}><Icon /></TrayIcon>)}
          <Language>ENG</Language>
          <TrayClock>3:33 PM<br />5 Mar 2019</TrayClock>
          <Notifications><NotifyIcon /></Notifications>
        </Tray>
      </Taskbar>
    </Window>
  );
}
